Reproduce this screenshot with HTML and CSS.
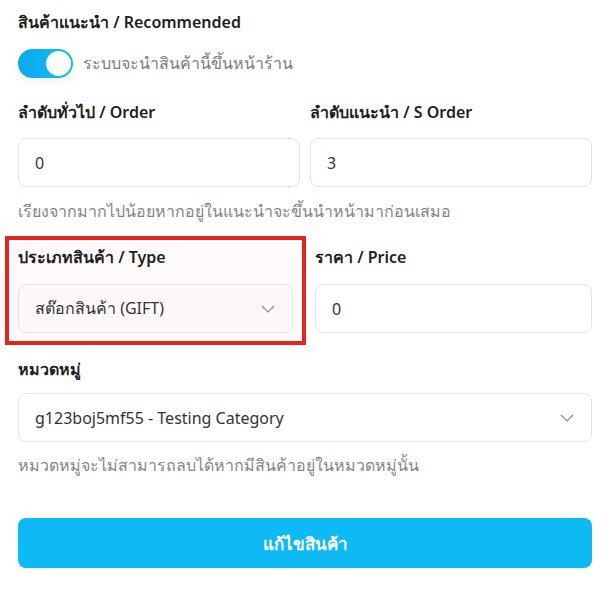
FILE: index.html
```html
<!DOCTYPE html>
<html lang="th">
<head>
<meta charset="utf-8">
<link rel="stylesheet" href="styles.css">
</head>
<body>
<form class="form">
  <div class="title">สินค้าแนะนำ / Recommended</div>
  <div class="toggle-row">
    <span class="toggle"><span class="knob"></span></span>
    <span class="toggle-text">ระบบจะนำสินค้านี้ขึ้นหน้าร้าน</span>
  </div>

  <div class="grid2 order-row">
    <div class="field">
      <div class="label">ลำดับทั่วไป / Order</div>
      <div class="input">0</div>
    </div>
    <div class="field">
      <div class="label">ลำดับแนะนำ / S Order</div>
      <div class="input">3</div>
    </div>
  </div>
  <div class="help">เรียงจากมากไปน้อยหากอยู่ในแนะนำจะขึ้นนำหน้ามาก่อนเสมอ</div>

  <div class="type-row">
    <div class="field highlight">
      <div class="label">ประเภทสินค้า / Type</div>
      <div class="input select pink">
        <span>สต๊อกสินค้า (GIFT)</span>
        <svg class="chev" width="14" height="8" viewBox="0 0 14 8"><path d="M1 1l6 6 6-6" fill="none" stroke="#8a8a8a" stroke-width="1.2"/></svg>
      </div>
    </div>
    <div class="field price">
      <div class="label">ราคา / Price</div>
      <div class="input">0</div>
    </div>
  </div>

  <div class="field cat">
    <div class="label">หมวดหมู่</div>
    <div class="input select">
      <span>g123boj5mf55 - Testing Category</span>
      <svg class="chev" width="14" height="8" viewBox="0 0 14 8"><path d="M1 1l6 6 6-6" fill="none" stroke="#8a8a8a" stroke-width="1.2"/></svg>
    </div>
  </div>
  <div class="help help-cat">หมวดหมู่จะไม่สามารถลบได้หากมีสินค้าอยู่ในหมวดหมู่นั้น</div>

  <div class="button">แก้ไขสินค้า</div>
</form>
</body>
</html>
```
FILE: styles.css
```css
* { box-sizing: border-box; }
body {
  margin: 0;
  background: #fff;
  font-family: "Noto Sans", "Open Sans", sans-serif;
  color: #222;
  font-size: 16px;
}
.form {
  padding: 10px 19px 20px 18px;
}
.title, .label {
  font-weight: 600;
  font-size: 16px;
  line-height: 24px;
  color: #1f1f1f;
}
.toggle-row {
  display: flex;
  align-items: center;
  gap: 10px;
  margin-top: 15px;
  height: 29px;
}
.toggle {
  position: relative;
  width: 55px;
  height: 29px;
  border-radius: 15px;
  background: linear-gradient(90deg, #0aa8ee, #14bdf5);
  box-shadow: 0 4px 8px rgba(0,0,0,0.06);
  flex: none;
}
.knob {
  position: absolute;
  right: 2px;
  top: 2px;
  width: 25px;
  height: 25px;
  border-radius: 50%;
  background: #fff;
}
.toggle-text {
  color: #7b7b7b;
  font-size: 16px;
}
.grid2 {
  display: grid;
  grid-template-columns: 1fr 1fr;
  gap: 10px;
}
.order-row { margin-top: 22px; }
.input {
  height: 49px;
  border: 1px solid #e4e4e4;
  border-radius: 8px;
  margin-top: 14px;
  padding: 0 16px;
  display: flex;
  align-items: center;
  color: #333;
  font-size: 16px;
  background: #fff;
}
.select { justify-content: space-between; }
.chev { flex: none; margin-right: 1px; }
.help {
  margin-top: 12px;
  line-height: 24px;
  color: #858585;
  font-size: 16px;
}
.type-row {
  display: grid;
  grid-template-columns: 301px 1fr;
  gap: 9px;
  margin-left: -13px;
  margin-top: 13px;
}
.highlight {
  border: 4px solid #e52421;
  background: #fefafc;
  padding: 5px 9px 8px 9px;
}
.highlight .input { margin-top: 15px; }
.pink { background: #fdf9fb; }
.price { padding-top: 9px; }
.price .input { margin-top: 15px; }
.cat { margin-top: 12px; }
.cat .input { margin-top: 12px; }
.help-cat { margin-top: 11px; }
.button {
  margin-top: 41px;
  height: 50px;
  border-radius: 8px;
  background: #0ebaf3;
  color: #fff;
  font-weight: 600;
  font-size: 17px;
  display: flex;
  align-items: center;
  justify-content: center;
}
```
